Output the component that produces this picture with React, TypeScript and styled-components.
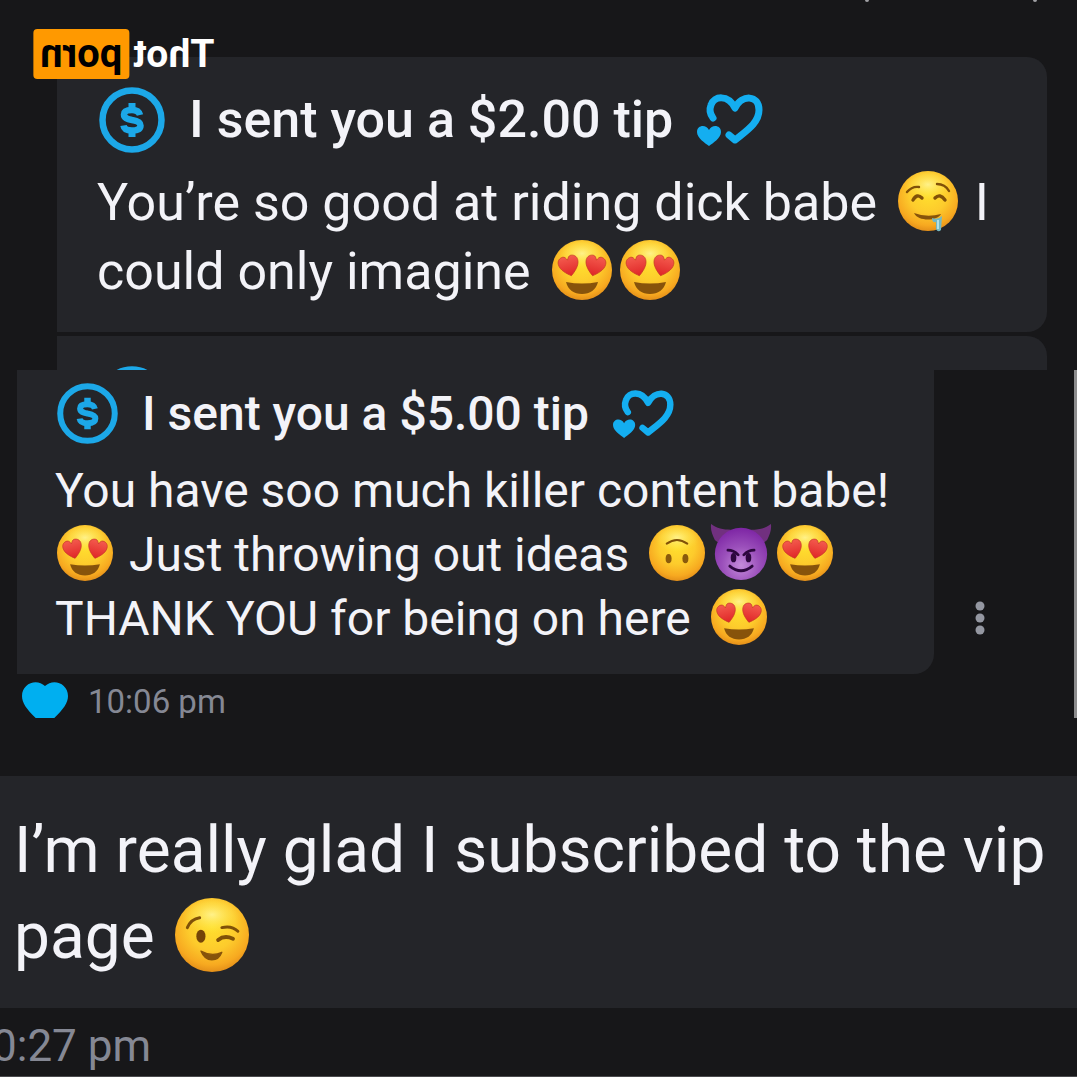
import React from "react";
import styled, { createGlobalStyle } from "styled-components";

const GlobalStyle = createGlobalStyle`
  * { box-sizing: border-box; }
  body { margin: 0; background: #171719; }
`;

const Page = styled.main`
  position: relative;
  display: flex;
  flex-direction: column;
  overflow: hidden;
  background: #171719;
  color: #f3f3f8;
  font-family: Roboto, "Liberation Sans", sans-serif;
`;

const Logo = styled.div`
  position: absolute;
  top: 29px;
  left: 33px;
  display: flex;
  align-items: center;
  gap: 4px;
  transform: scaleX(-1);
  color: #fff;
  font-size: 39px;
  font-weight: 700;
  line-height: 50px;
`;

const LogoBadge = styled.span`
  padding: 0 7px;
  border-radius: 4px;
  background: #ff9900;
  color: #000;
  font-size: 40px;
`;

const TopEdge = styled.div`
  display: flex;
  justify-content: flex-end;
  gap: 164px;
  height: 57px;
  padding-right: 40px;
`;

const Speck = styled.span`
  width: 4px;
  height: 2px;
  border-radius: 0 0 2px 2px;
  background: #a0a0a4;
`;

const FirstShot = styled.section`
  display: flex;
  flex-direction: column;
  gap: 4px;
  padding: 0 30px 0 57px;
`;

const Card = styled.article<{ $pad: string; $radius: string }>`
  padding: ${(p) => p.$pad};
  border-radius: ${(p) => p.$radius};
  background: #242529;
`;

const NextCard = styled.div`
  height: 34px;
  padding: 30px 42px 0;
  overflow: hidden;
  border-radius: 0 20px 0 0;
  background: #242529;
`;

const TipHeader = styled.header`
  display: flex;
  align-items: center;
  gap: 24px;
  margin-bottom: 15px;
  padding-left: 2px;
  svg { flex: none; }
`;

const Title = styled.h2<{ $size: number }>`
  margin: 0;
  font-size: ${(p) => p.$size}px;
  line-height: 60px;
  font-weight: 500;
  white-space: nowrap;
`;

const Message = styled.p<{ $size: number; $line: number }>`
  margin: 0;
  font-size: ${(p) => p.$size}px;
  line-height: ${(p) => p.$line}px;
  white-space: nowrap;
`;

const Face = styled.svg<{ $lead: number; $gap: number; $drop: number }>`
  display: inline-block;
  margin: 0 ${(p) => p.$gap}px 0 ${(p) => p.$lead}px;
  vertical-align: -${(p) => p.$drop}px;
  overflow: visible;
`;

const SecondShot = styled.section`
  padding-left: 17px;
  border-right: 3px solid #8d8d8e;
`;

const CardRow = styled.div`
  display: grid;
  grid-template-columns: 1fr 140px;
`;

const MenuButton = styled.button`
  align-self: end;
  justify-self: start;
  margin: 0 0 35px 35px;
  padding: 4px 6px;
  border: 0;
  background: none;
  line-height: 0;
`;

const LikeRow = styled.footer`
  display: flex;
  align-items: flex-start;
  gap: 20px;
  height: 44px;
  padding: 8px 5px 0;
  overflow: hidden;
`;

const Time = styled.time<{ $size: number; $line: number }>`
  color: #858894;
  font-size: ${(p) => p.$size}px;
  line-height: ${(p) => p.$line}px;
  white-space: nowrap;
`;

const ThirdShot = styled.section`
  margin-top: 58px;
`;

const LastRow = styled.footer`
  display: flex;
  height: 69px;
  padding-top: 12px;
  overflow: hidden;
  border-bottom: 1px solid #4a4a4d;
  time { margin-left: -8px; }
`;

const Defs = styled.svg`
  position: absolute;
  width: 0;
  height: 0;
`;

const SharedGradients = () => (
  <Defs aria-hidden="true">
    <defs>
      <radialGradient id="face" cx="50%" cy="38%" r="64%">
        <stop offset="0" stopColor="#ffe02e" />
        <stop offset="0.5" stopColor="#fdcb2c" />
        <stop offset="0.82" stopColor="#f7a920" />
        <stop offset="1" stopColor="#e08a18" />
      </radialGradient>
      <radialGradient id="shine" cx="50%" cy="45%" r="50%">
        <stop offset="0" stopColor="#fff69a" stopOpacity="0.85" />
        <stop offset="1" stopColor="#ffe94a" stopOpacity="0" />
      </radialGradient>
      <radialGradient id="imp" cx="50%" cy="72%" r="72%">
        <stop offset="0" stopColor="#c58bdb" />
        <stop offset="0.5" stopColor="#9b50bb" />
        <stop offset="1" stopColor="#7d25a4" />
      </radialGradient>
      <linearGradient id="eyeHeart" x1="0" y1="0" x2="0" y2="1">
        <stop offset="0" stopColor="#f45b4e" />
        <stop offset="1" stopColor="#df2527" />
      </linearGradient>
    </defs>
  </Defs>
);

type FaceKind = "love" | "drool" | "flip" | "imp" | "wink";

const HeartEye = ({ turn }: { turn: string }) => (
  <path
    transform={turn}
    d="M0 10C-4 7-10 2-10-4C-10-8-7-10-4-10C-2-10-1-8 0-6C1-8 2-10 4-10C7-10 10-8 10-4C10 2 4 7 0 10Z"
    fill="url(#eyeHeart)"
    stroke="#c53a25"
    strokeWidth="0.7"
  />
);

type EmojiProps = { kind: FaceKind; size: number; lead?: number; gap?: number };

const Emoji = ({ kind, size, lead = 0, gap = 0 }: EmojiProps) => {
  const line = { fill: "none", stroke: "#805108", strokeLinecap: "round" as const };
  return (
    <Face
      $lead={lead}
      $gap={gap}
      $drop={Math.round(size * 0.185)}
      width={size}
      height={size}
      viewBox="0 0 60 60"
      role="img"
      aria-label={kind}
    >
      {kind === "imp" ? (
        <>
          <path d="M2 16C-1 10-3 4-2-1C4 4 11 5 19 5L7 20ZM58 16C61 10 63 4 62-1C56 4 49 5 41 5L53 20Z" fill="#71307f" />
          <circle cx="30" cy="31" r="28" fill="url(#imp)" />
          <ellipse cx="22" cy="35" rx="3" ry="5" fill="#2d073f" />
          <ellipse cx="38" cy="35" rx="3" ry="5" fill="#2d073f" />
          <path d="M16 27C20 27 24 29 27 32M44 27C40 27 36 29 33 32M18 44Q30 54 42 44" {...line} stroke="#2d073f" strokeWidth="3" />
        </>
      ) : (
        <>
          <circle cx="30" cy="30" r="30" fill="url(#face)" />
          <ellipse cx="30" cy="15" rx="24" ry="15" fill="url(#shine)" />
        </>
      )}
      {kind === "love" && (
        <>
          <HeartEye turn="translate(17 26) rotate(-14)" />
          <HeartEye turn="translate(43 26) rotate(14)" />
          <path d="M14 42Q30 45 46 42C44 50 38 54 30 54S16 50 14 42Z" fill="#87530b" />
        </>
      )}
      {kind === "drool" && (
        <>
          <path d="M9 21Q14 15 21 16M39 13Q47 13 51 20" {...line} strokeWidth="2.4" />
          <path d="M15 29Q19 22 24 27M37 27Q42 22 47 29" {...line} strokeWidth="3.4" />
          <path d="M16 42Q29 47 43 43C40 50 20 51 16 42Z" fill="#87530b" />
          <path d="M34 47Q40 49 44 45L43 59Q40 62 38 58L38 51Q34 52 34 47Z" fill="#74b8c2" />
          <path d="M40 49V58" stroke="#c9eef0" strokeWidth="1.5" />
        </>
      )}
      {kind === "flip" && (
        <>
          <path d="M19 20Q30 12 41 20" {...line} strokeWidth="2.2" />
          <ellipse cx="21" cy="36" rx="3.2" ry="5" fill="#8a5a0c" />
          <ellipse cx="39" cy="36" rx="3.2" ry="5" fill="#8a5a0c" />
        </>
      )}
      {kind === "wink" && (
        <>
          <path d="M10 24Q13 17 20 16M38 24Q46 22 51 27" {...line} strokeWidth="2.4" />
          <ellipse cx="21" cy="31" rx="3.7" ry="5.3" fill="#744408" />
          <path d="M35 34Q40 30 47 33" {...line} strokeWidth="3.2" />
          <path d="M21 43Q30 48 38 44C35 52 25 53 21 43Z" fill="#87530b" stroke="#87530b" strokeLinejoin="round" />
        </>
      )}
    </Face>
  );
};

const Coin = ({ size }: { size: number }) => (
  <svg width={size} height={size} viewBox="0 0 66 66" fill="none" stroke="#1ca8e8" aria-hidden="true">
    <circle cx="33" cy="33" r="29.5" strokeWidth="6.5" />
    <path
      d="M41 28C40 24 37 23 33 23C28 23 25 24.500 25 27.500C25 31 28 32 33 33C39 34 41.500 35.500 41.500 38.500C41.500 42 38 43.500 33 43.500C28 43.500 25 42 24.500 38.500"
      strokeWidth="6.500"
    />
    <path d="M33 16V23M33 43V50" strokeWidth="7" />
  </svg>
);

const TipHearts = ({ width }: { width: number }) => (
  <svg width={width} height={Math.round((width * 54) / 66)} viewBox="0 0 66 54" aria-hidden="true">
    <path
      d="M16 25C13 21 12 17 14 12C17 3 31 1 38 15C45 1 62 2 62 17C62 30 49 38 38 47L32 42"
      fill="none"
      stroke="#14aef0"
      strokeWidth="7"
      strokeLinecap="round"
      strokeLinejoin="round"
    />
    <path d="M12 53C8 50 0 45 0 39C0 32 9 31 12 37C15 31 24 32 24 39C24 45 16 50 12 53Z" fill="#14aef0" />
  </svg>
);

export default function App() {
  return (
    <>
      <GlobalStyle />
      <Page>
        <SharedGradients />
        <TopEdge aria-hidden="true">
          <Speck />
          <Speck />
        </TopEdge>
        <FirstShot>
          <Card $pad="30px 40px 26px" $radius="0 20px 20px 0">
            <TipHeader>
              <Coin size={66} />
              <Title $size={52}>I sent you a $2.00 tip</Title>
              <TipHearts width={66} />
            </TipHeader>
            <Message $size={52} $line={69}>
              You’re so good at riding dick babe <Emoji kind="drool" size={60} lead={8} gap={4} /> I<br />
              could only imagine <Emoji kind="love" size={60} lead={8} gap={8} />
              <Emoji kind="love" size={60} />
            </Message>
          </Card>
          <NextCard>
            <Coin size={66} />
          </NextCard>
        </FirstShot>
        <SecondShot>
          <CardRow>
            <Card $pad="13px 38px 23px" $radius="0 0 20px 0">
              <TipHeader>
                <Coin size={61} />
                <Title $size={48}>I sent you a $5.00 tip</Title>
                <TipHearts width={61} />
              </TipHeader>
              <Message $size={48} $line={64}>
                You have soo much killer content babe!
                <br />
                <Emoji kind="love" size={56} lead={2} gap={4} /> Just throwing out ideas{" "}
                <Emoji kind="flip" size={56} lead={8} gap={8} />
                <Emoji kind="imp" size={56} gap={8} />
                <Emoji kind="love" size={56} />
                <br />
                THANK YOU for being on here <Emoji kind="love" size={56} lead={8} />
              </Message>
            </Card>
            <MenuButton type="button" aria-label="More options">
              <svg width="10" height="34" viewBox="0 0 10 34" fill="#9497a1">
                <circle cx="5" cy="5" r="4.500" />
                <circle cx="5" cy="17" r="4.500" />
                <circle cx="5" cy="29" r="4.500" />
              </svg>
            </MenuButton>
          </CardRow>
          <LikeRow>
            <svg width="46" height="43" viewBox="0 0 46 43" role="img" aria-label="Liked">
              <path d="M23 4C31-4 46 1 46 14C46 22 40 29 27 41Q23 44 19 41C6 29 0 22 0 14C0 1 15-4 23 4Z" fill="#00aff0" />
            </svg>
            <Time $size={33} $line={40}>10:06 pm</Time>
          </LikeRow>
        </SecondShot>
        <ThirdShot>
          <Card $pad="32px 14px 28px" $radius="0">
            <Message $size={64} $line={86}>
              I’m really glad I subscribed to the vip
              <br />
              page <Emoji kind="wink" size={74} lead={4} />
            </Message>
          </Card>
          <LastRow>
            <Time $size={44} $line={52}>0:27 pm</Time>
          </LastRow>
        </ThirdShot>
        <Logo>
          <span>Thot</span>
          <LogoBadge>porn</LogoBadge>
        </Logo>
      </Page>
    </>
  );
}
